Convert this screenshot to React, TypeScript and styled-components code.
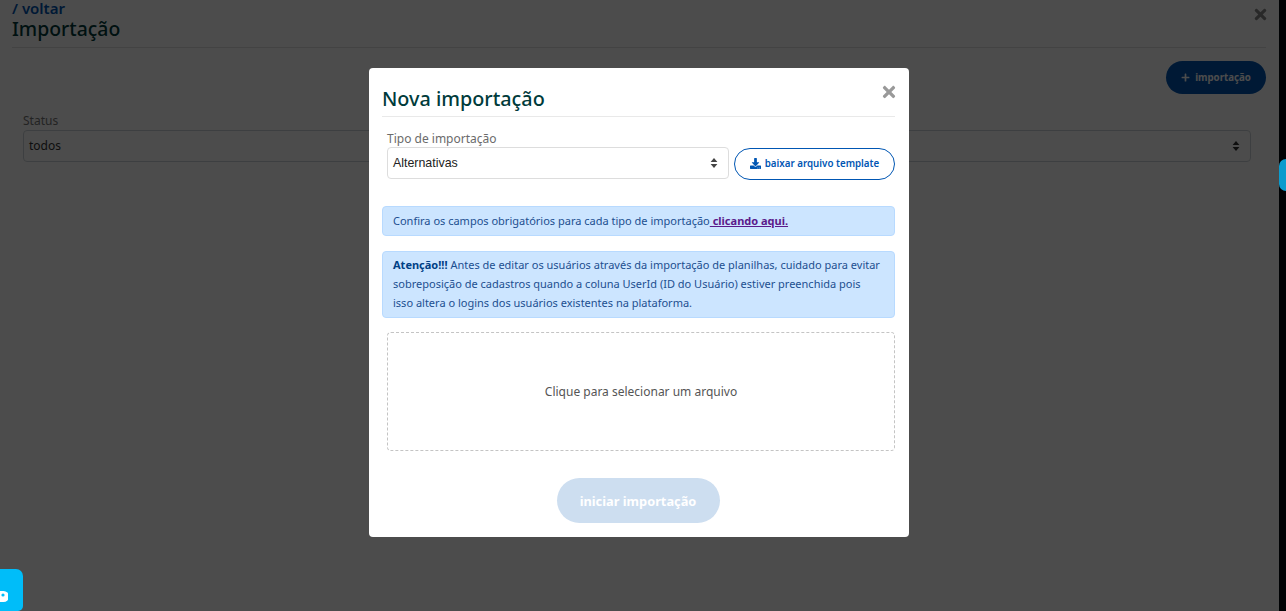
import React from 'react';
import styled, { createGlobalStyle } from 'styled-components';
import { FaDownload, FaPlus, FaTimes } from 'react-icons/fa';

const FONT = `'Noto Sans', 'Open Sans', sans-serif`;

const GlobalStyle = createGlobalStyle`
  html, body {
    margin: 0;
    padding: 0;
    height: 100%;
    overflow: hidden;
    background: #fff;
    font-family: ${FONT};
  }
  * {
    box-sizing: border-box;
  }
`;

const SelectArrows = () => (
  <svg width="8" height="12" viewBox="0 0 8 12" fill="currentColor">
    <path d="M4 1 7.4 5H.6z" />
    <path d="M4 11 .6 7h6.8z" />
  </svg>
);

const ChatGlyph = () => (
  <svg width="8" height="14" viewBox="0 0 8 14">
    <path d="M0 1h3.5a4.5 4.5 0 0 1 0 11H0z" fill="#fff" />
    <circle cx="3" cy="5" r="1.6" fill="#00bdf9" />
  </svg>
);

export default function App() {
  return (
    <>
      <GlobalStyle />
      <Page>
        <Content>
          <BackLink>/ voltar</BackLink>
          <PageTitle>Importação</PageTitle>
          <Divider />
          <ActionRow>
            <AddButton>
              <FaPlus size={9} />
              importação
            </AddButton>
          </ActionRow>
          <FilterBlock>
            <FilterLabel>Status</FilterLabel>
            <FilterSelect>
              <span>todos</span>
              <SelectArrows />
            </FilterSelect>
          </FilterBlock>
          <PageClose>
            <FaTimes size={17} />
          </PageClose>
        </Content>
        <SideStrip />
        <Backdrop />
        <SideTab />
        <ChatBadge>
          <ChatGlyph />
        </ChatBadge>
        <Overlay>
          <Modal>
            <ModalHeader>
              <ModalTitle>Nova importação</ModalTitle>
              <ModalClose>
                <FaTimes size={18} />
              </ModalClose>
            </ModalHeader>
            <TypeRow>
              <TypeField>
                <TypeLabel>Tipo de importação</TypeLabel>
                <TypeSelect>
                  <span>Alternativas</span>
                  <SelectArrows />
                </TypeSelect>
              </TypeField>
              <TemplateButton>
                <FaDownload size={11} />
                baixar arquivo template
              </TemplateButton>
            </TypeRow>
            <Notice $top={26} $single>
              Confira os campos obrigatórios para cada tipo de importação
              <NoticeLink> clicando aqui.</NoticeLink>
            </Notice>
            <Notice $top={15}>
              <strong>Atenção!!!</strong> Antes de editar os usuários através da importação de
              planilhas, cuidado para evitar
              <br />
              sobreposição de cadastros quando a coluna UserId (ID do Usuário) estiver preenchida pois
              <br />
              isso altera o logins dos usuários existentes na plataforma.
            </Notice>
            <DropZone>Clique para selecionar um arquivo</DropZone>
            <ModalFooter>
              <StartButton>iniciar importação</StartButton>
            </ModalFooter>
          </Modal>
        </Overlay>
      </Page>
    </>
  );
}

const Page = styled.div`
  position: relative;
  display: flex;
  width: 100%;
  height: 611px;
  overflow: hidden;
  background: #fff;
`;

const Content = styled.main`
  position: relative;
  display: flex;
  flex: 1;
  flex-direction: column;
  padding: 0 13px 0 12px;
`;

const SideStrip = styled.aside`
  flex: 0 0 7px;
  background: #03070f;
`;

const BackLink = styled.a`
  height: 16px;
  font-size: 15px;
  font-weight: 600;
  line-height: 16px;
  color: #0056b3;
`;

const PageTitle = styled.h1`
  margin: 0;
  height: 31px;
  font-size: 19.4px;
  font-weight: 500;
  line-height: 26px;
  color: #003b3b;
`;

const Divider = styled.div`
  height: 1px;
  background: #dfdfdf;
`;

const ActionRow = styled.div`
  display: flex;
  justify-content: flex-end;
  padding-top: 13px;
`;

const AddButton = styled.button`
  display: flex;
  align-items: center;
  justify-content: center;
  gap: 5px;
  width: 100px;
  height: 33px;
  border: 0;
  border-radius: 17px;
  background: #0056b3;
  color: #fff;
  font-family: ${FONT};
  font-size: 9.7px;
  font-weight: 700;
`;

const FilterBlock = styled.div`
  margin: 18px 15px 0 11px;
`;

const FilterLabel = styled.div`
  height: 18px;
  font-size: 12px;
  line-height: 18px;
  color: #777;
`;

const FilterSelect = styled.div`
  display: flex;
  align-items: center;
  justify-content: space-between;
  height: 32px;
  padding: 0 10px 1px 5px;
  border: 1px solid #ced4da;
  border-radius: 4px;
  font-size: 12px;
  color: #333;
`;

const PageClose = styled.div`
  position: absolute;
  top: 6px;
  right: 10px;
  display: flex;
  color: #8b8b8b;
`;

const SideTab = styled.div`
  position: absolute;
  top: 159px;
  right: 0;
  width: 7px;
  height: 32px;
  border-radius: 14px 0 0 14px;
  background: #0b9bcd;
`;

const ChatBadge = styled.div`
  position: absolute;
  left: 0;
  bottom: 0;
  display: flex;
  align-items: flex-end;
  width: 23px;
  height: 42px;
  padding-bottom: 7px;
  border-radius: 0 7px 5px 0;
  background: #00bdf9;
`;

const Backdrop = styled.div`
  position: absolute;
  inset: 0;
  background: rgba(0, 0, 0, 0.7);
`;

const Overlay = styled.div`
  position: absolute;
  inset: 0 8px 0 0;
  display: flex;
  justify-content: center;
  align-items: flex-start;
  padding-top: 68px;
`;

const Modal = styled.div`
  display: flex;
  flex-direction: column;
  width: 540px;
  height: 469px;
  padding: 0 14px 0 13px;
  border-radius: 4px;
  background: #fff;
`;

const ModalHeader = styled.div`
  display: flex;
  align-items: flex-start;
  justify-content: space-between;
  height: 49px;
  border-bottom: 1px solid #e9e9e9;
`;

const ModalTitle = styled.h2`
  margin: 16px 0 0;
  font-size: 19.8px;
  font-weight: 500;
  line-height: 30px;
  color: #003b3b;
`;

const ModalClose = styled.div`
  display: flex;
  margin: 15px -3px 0 0;
  color: #999;
`;

const TypeRow = styled.div`
  display: flex;
  align-items: flex-end;
  gap: 5px;
  margin: 14px 0 0 5px;
`;

const TypeField = styled.div`
  flex: 1;
  margin-bottom: 1px;
`;

const TypeLabel = styled.div`
  height: 16px;
  font-size: 12px;
  line-height: 16px;
  color: #6b6b6b;
`;

const TypeSelect = styled.div`
  display: flex;
  align-items: center;
  justify-content: space-between;
  height: 32px;
  padding: 0 10px 0 5px;
  border: 1px solid #ddd;
  border-radius: 4px;
  font-family: 'Liberation Sans', sans-serif;
  font-size: 12.4px;
  color: #222;

  svg {
    color: #444;
  }
`;

const TemplateButton = styled.button`
  display: flex;
  align-items: center;
  justify-content: center;
  gap: 4px;
  flex-shrink: 0;
  width: 161px;
  height: 32px;
  padding: 0 0 1px;
  border: 1px solid #0056b3;
  border-radius: 16px;
  background: #fff;
  color: #0056b3;
  font-family: ${FONT};
  font-size: 9.75px;
  font-weight: 600;
`;

const Notice = styled.div<{ $top: number; $single?: boolean }>`
  margin-top: ${(props) => props.$top}px;
  padding: ${(props) => (props.$single ? '4px 10px 5px' : '3px 10px 5px')};
  padding-left: 10px;
  border: 1px solid #b8daff;
  border-radius: 4px;
  background: #cce5ff;
  font-size: 11px;
  line-height: 19px;
  white-space: nowrap;
  color: #1c4f90;

  strong {
    font-weight: 700;
    color: #004085;
  }
`;

const NoticeLink = styled.a`
  font-weight: 700;
  color: #5b1a8b;
  text-decoration: underline;
`;

const DropZone = styled.div`
  display: flex;
  align-items: center;
  justify-content: center;
  height: 119px;
  margin: 14px 0 0 5px;
  border: 1px dashed #c4c4c4;
  border-radius: 4px;
  font-size: 12px;
  color: #555;
`;

const ModalFooter = styled.div`
  display: flex;
  justify-content: center;
  margin-top: 27px;
  padding-right: 1px;
`;

const StartButton = styled.button`
  width: 163px;
  height: 45px;
  border: 0;
  border-radius: 23px;
  background: #cddef0;
  color: #fff;
  font-family: ${FONT};
  font-size: 12.8px;
  font-weight: 700;
`;
